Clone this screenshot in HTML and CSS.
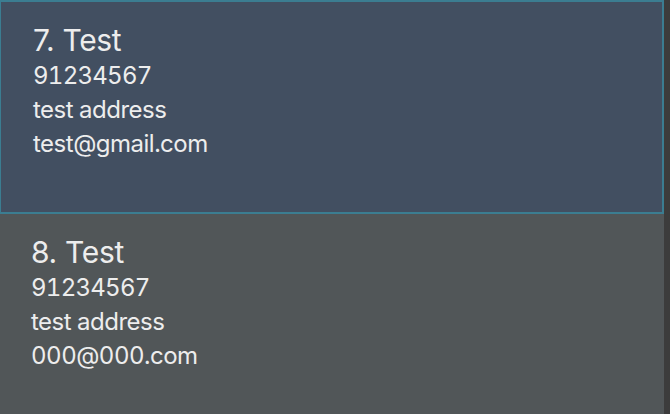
FILE: index.html
```html
<!DOCTYPE html>
<html>
<head>
<meta charset="utf-8">
<link rel="stylesheet" href="styles.css">
</head>
<body>
<div class="list">
  <div class="cells">
    <div class="cell selected">
      <div class="name">7. Test</div>
      <div class="detail phone">91234567</div>
      <div class="detail">test address</div>
      <div class="detail">test@gmail.com</div>
    </div>
    <div class="cell">
      <div class="name">8. Test</div>
      <div class="detail phone">91234567</div>
      <div class="detail">test address</div>
      <div class="detail">000@000.com</div>
    </div>
  </div>
  <div class="scrollbar"></div>
</div>
</body>
</html>
```
FILE: styles.css
```css
html, body {
  margin: 0;
  padding: 0;
  height: 100%;
  overflow: hidden;
}
body {
  font-family: Inter, "Noto Sans", sans-serif;
  color: #ededed;
  background: #515658;
}
.list {
  display: flex;
  height: 414px;
}
.cells {
  flex: 1;
  display: flex;
  flex-direction: column;
}
.scrollbar {
  width: 6px;
  background: #3c3c3c;
}
.cell {
  height: 214px;
  box-sizing: border-box;
  padding: 21px 0 0 31px;
  background: #515658;
  flex: none;
}
.cell + .cell {
  flex: 1;
}
.cell.selected {
  background: #424f61;
  border: 2px solid #3b7d91;
  border-left-width: 1px;
  padding: 21px 0 0 32px;
}
.name {
  font-size: 30px;
  line-height: 34px;
  letter-spacing: -0.3px;
  margin-bottom: 2px;
}
.detail {
  font-size: 24px;
  line-height: 34px;
  letter-spacing: -0.5px;
  font-variant-numeric: tabular-nums;
}
.detail.phone {
  letter-spacing: -0.75px;
}
```
